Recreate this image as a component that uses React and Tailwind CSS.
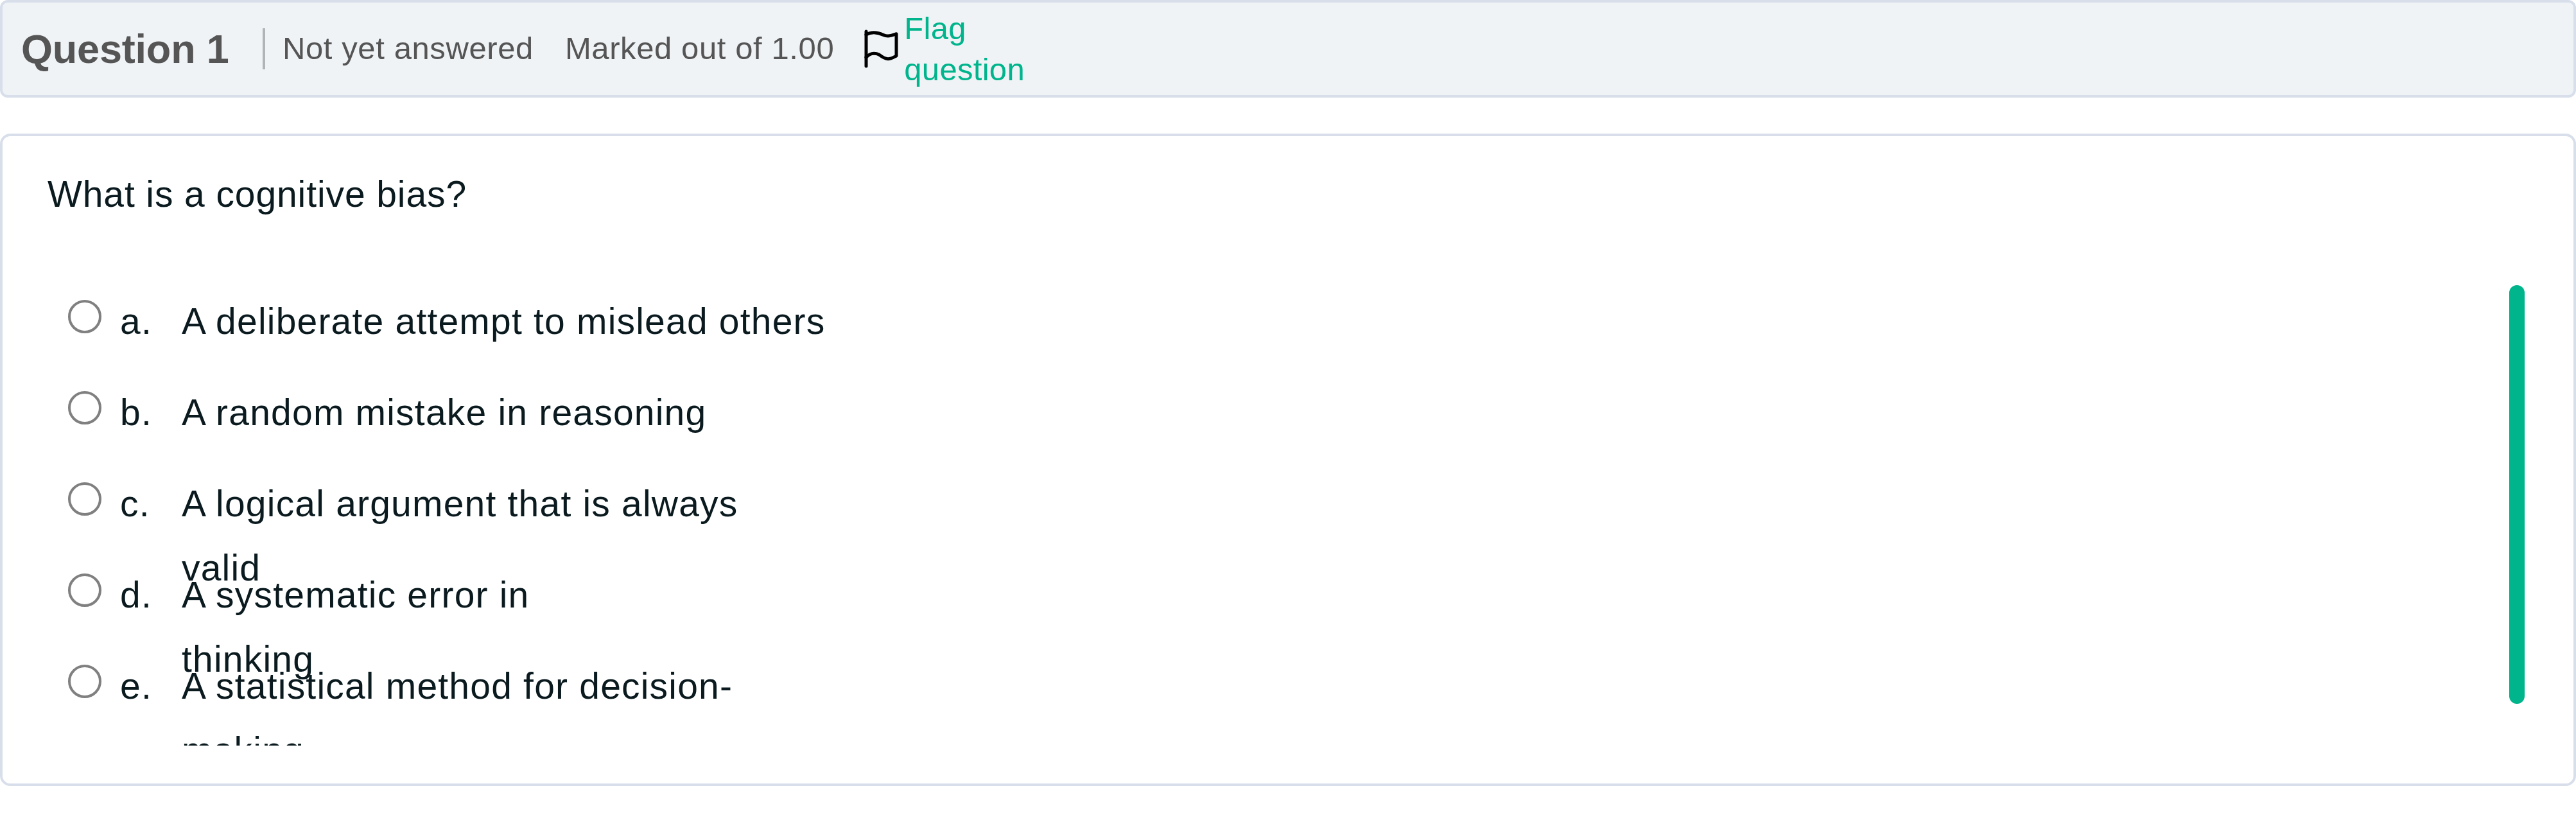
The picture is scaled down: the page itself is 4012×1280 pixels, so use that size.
import React from "react";

const OPTIONS = [
  { id: "a", lines: ["A deliberate attempt to mislead others"] },
  { id: "b", lines: ["A random mistake in reasoning"] },
  { id: "c", lines: ["A logical argument that is always", "valid"] },
  { id: "d", lines: ["A systematic error in", "thinking"] },
  { id: "e", lines: ["A statistical method for decision-", "making"] },
];

function FlagIcon() {
  return (
    <svg width="54" height="60" viewBox="0 0 54 60" fill="none" stroke="#000" strokeWidth="5" strokeLinecap="round" strokeLinejoin="round" className="shrink-0">
      <path d="M3 3V57" />
      <path d="M3 8C7 5.5 11 4.7 15 4.7C20 4.7 25 6 30 8.5C33 10 35 10 37 10C42 10 46 8 50 6.7V41C46 43 42 45.7 37 45.7C32 45.7 27 42 23 39C20 37.5 17 37.3 15 37.3C10 37.3 6 40 3 43.3" />
    </svg>
  );
}

function OptionRow({ option }) {
  return (
    <div className="flex h-[142px] items-start pl-[102px]">
      <span className="mt-[17px] h-[52px] w-[52px] shrink-0 rounded-full border-[4px] border-[#808080] bg-white" />
      <span className="ml-[29px] w-[96px] shrink-0 leading-[100px]">{option.id}.</span>
      <div className="leading-[100px] whitespace-nowrap">
        {option.lines.map((line) => (
          <p key={line}>{line}</p>
        ))}
      </div>
    </div>
  );
}

export default function App() {
  return (
    <div className="h-[1280px] w-[4012px] overflow-hidden bg-white font-['Liberation_Sans',sans-serif]">
      <div className="flex h-[152px] items-center rounded-[12px] border-[4px] border-[#d8dfeb] bg-[#eff3f6] pl-[29px] text-[49px] tracking-[0.6px] text-[#555555]">
        <h2 className="w-[324px] shrink-0 whitespace-nowrap text-[63px] font-bold tracking-[-0.2px]">Question 1</h2>
        <span className="ml-[52px] h-[64px] w-[4px] bg-[#b0b4b8]" />
        <span className="ml-[27px]">Not yet answered</span>
        <span className="ml-[49px]">Marked out of 1.00</span>
        <div className="ml-[47px] flex items-center">
          <FlagIcon />
          <a className="ml-[8px] w-[200px] leading-[64px] tracking-[0.3px] text-[#00b48c]">Flag question</a>
        </div>
      </div>
      <div className="mt-[56px] h-[1016px] rounded-[16px] border-[4px] border-[#d8dfeb] bg-white pl-[70px] text-[57px] tracking-[1.2px] text-[#0a1a1f]">
        <p className="pt-[54px] leading-[72px] tracking-[0.9px]">What is a cognitive bias?</p>
        <div className="relative -ml-[70px] mt-[78px] h-[745px] overflow-hidden">
          <div className="pt-[34px]">
            {OPTIONS.map((option) => (
              <OptionRow key={option.id} option={option} />
            ))}
          </div>
          <div className="absolute right-[76px] top-[28px] h-[652px] w-[24px] rounded-full bg-[#00b48c]" />
        </div>
      </div>
    </div>
  );
}
